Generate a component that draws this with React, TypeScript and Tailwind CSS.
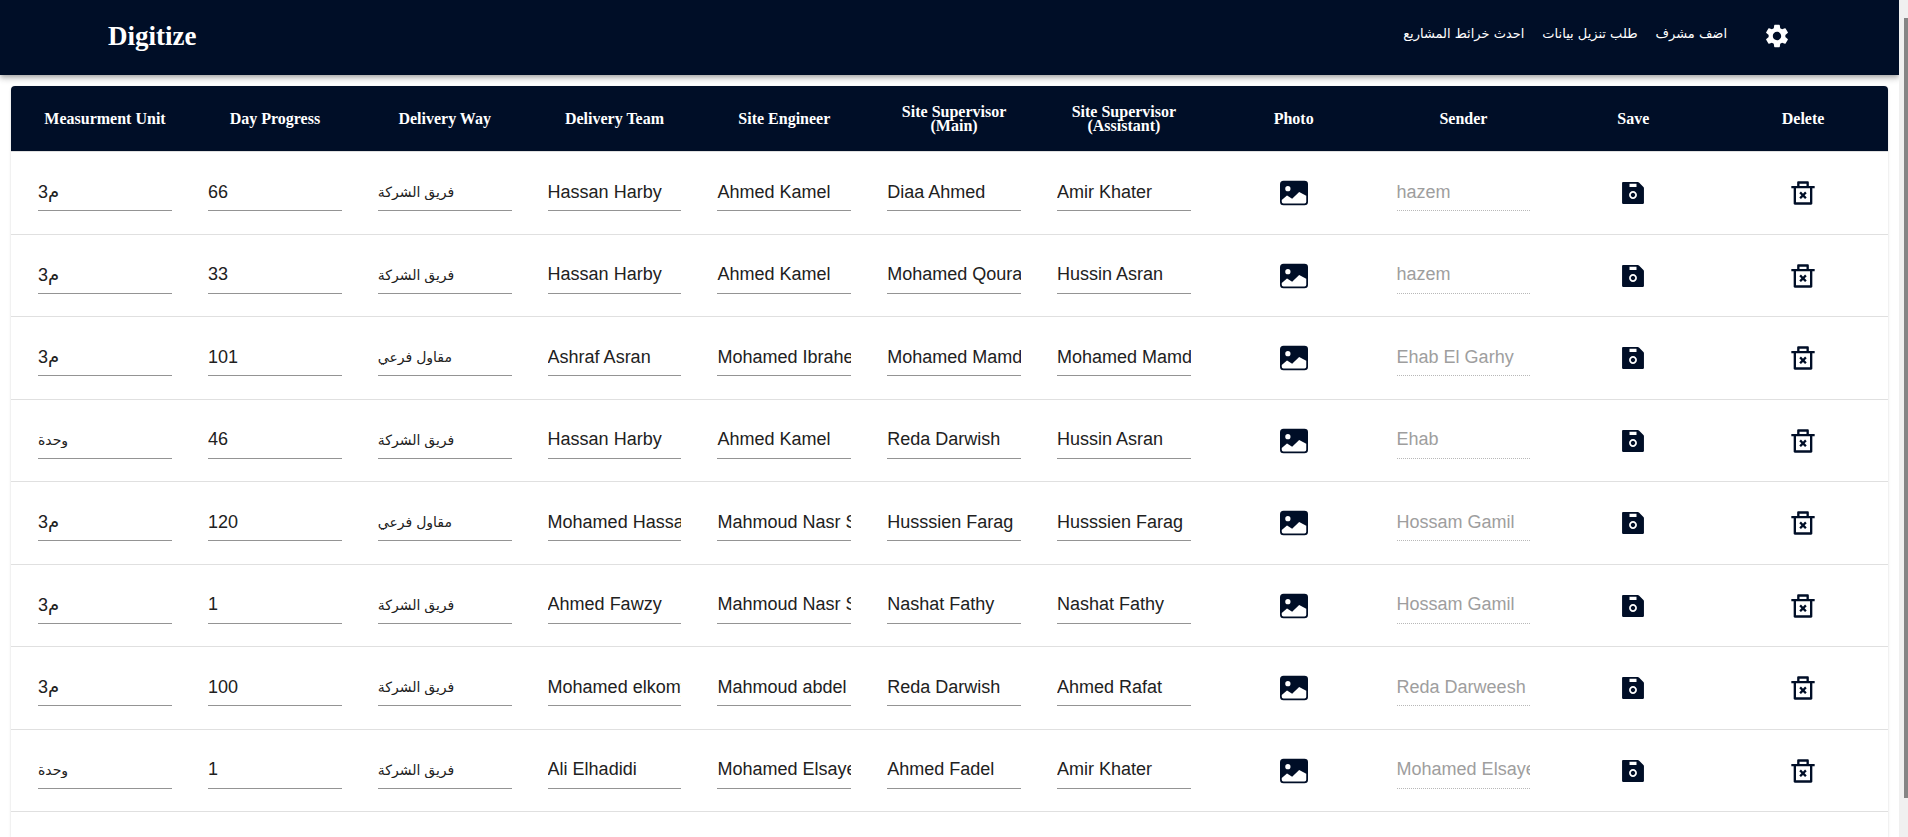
import { useState } from 'react';
import { AiFillSave } from 'react-icons/ai';
import { BsImageFill } from 'react-icons/bs';
import { MdSettings } from 'react-icons/md';
import { RiDeleteBin2Line } from 'react-icons/ri';

const columns = [
  'Measurment Unit',
  'Day Progress',
  'Delivery Way',
  'Delivery Team',
  'Site Engineer',
  'Site Supervisor (Main)',
  'Site Supervisor (Assistant)',
  'Photo',
  'Sender',
  'Save',
  'Delete',
];

const company = 'فريق الشركة';
const contractor = 'مقاول فرعي';
const cubic = 'م3';
const unit = 'وحدة';

type Row = { fields: string[]; sender: string };

const rows: Row[] = [
  { fields: [cubic, '66', company, 'Hassan Harby', 'Ahmed Kamel', 'Diaa Ahmed', 'Amir Khater'], sender: 'hazem' },
  { fields: [cubic, '33', company, 'Hassan Harby', 'Ahmed Kamel', 'Mohamed Qourany', 'Hussin Asran'], sender: 'hazem' },
  { fields: [cubic, '101', contractor, 'Ashraf Asran', 'Mohamed Ibrahem', 'Mohamed Mamdouh', 'Mohamed Mamdouh'], sender: 'Ehab El Garhy' },
  { fields: [unit, '46', company, 'Hassan Harby', 'Ahmed Kamel', 'Reda Darwish', 'Hussin Asran'], sender: 'Ehab' },
  { fields: [cubic, '120', contractor, 'Mohamed Hassan', 'Mahmoud Nasr Saad', 'Husssien Farag', 'Husssien Farag'], sender: 'Hossam Gamil' },
  { fields: [cubic, '1', company, 'Ahmed Fawzy', 'Mahmoud Nasr Saad', 'Nashat Fathy', 'Nashat Fathy'], sender: 'Hossam Gamil' },
  { fields: [cubic, '100', company, 'Mohamed elkomy', 'Mahmoud abdel', 'Reda Darwish', 'Ahmed Rafat'], sender: 'Reda Darweesh' },
  { fields: [unit, '1', company, 'Ali Elhadidi', 'Mohamed Elsayed', 'Ahmed Fadel', 'Amir Khater'], sender: 'Mohamed Elsayed' },
];

const cell = 'px-[18px] first:pl-[27px] py-0 align-middle';
const field =
  "block h-9 w-full border-b bg-transparent pb-px font-['Liberation_Sans','DejaVu_Sans',sans-serif] outline-none";

function Field({ label, initial }: { label: string; initial: string }) {
  const [value, setValue] = useState(initial);
  const arabicWord = /^[\u0600-\u06ff ]+$/.test(value);
  return (
    <input
      aria-label={label}
      value={value}
      onChange={(e) => setValue(e.target.value)}
      className={`${field} border-[#949494] text-[#212121] ${arabicWord ? 'text-sm' : 'text-lg'}`}
    />
  );
}

function IconButton({ label, children }: { label: string; children: React.ReactNode }) {
  return (
    <button type="button" aria-label={label} className="mx-auto block cursor-pointer text-[28px] text-[#000e27]">
      {children}
    </button>
  );
}

function Header() {
  return (
    <header className="relative z-10 flex h-[75px] shrink-0 items-center justify-between bg-[#000e27] px-[108px] pb-[3px] text-white shadow-[0_2px_4px_-1px_rgba(0,0,0,0.2),0_4px_5px_0_rgba(0,0,0,0.14),0_1px_10px_0_rgba(0,0,0,0.12)]">
      <h1 className="text-[27px] font-bold">Digitize</h1>
      <div className="flex items-center">
        <nav className="flex gap-[18px] pr-9 pb-1 font-['DejaVu_Sans',sans-serif] text-[13px]">
          <a href="#maps">احدث خرائط المشاريع</a>
          <a href="#download">طلب تنزيل بيانات</a>
          <a href="#supervisor">اضف مشرف</a>
        </nav>
        <button type="button" aria-label="Settings" className="cursor-pointer text-[28px]">
          <MdSettings />
        </button>
      </div>
    </header>
  );
}

export default function App() {
  return (
    <div className="flex h-screen overflow-hidden bg-white font-['Liberation_Serif',serif]">
      <div className="flex min-w-0 flex-1 flex-col overflow-hidden">
        <Header />
        <main className="flex flex-1 flex-col px-[11px] pt-[11px]">
          <div className="flex-1 rounded-t bg-white shadow-[0_2px_1px_-1px_rgba(0,0,0,0.2),0_1px_1px_0_rgba(0,0,0,0.14),0_1px_3px_0_rgba(0,0,0,0.12)]">
            <table className="w-full table-fixed border-separate border-spacing-0">
              <thead>
                <tr className="h-[66px]">
                  {columns.map((name) => (
                    <th
                      key={name}
                      scope="col"
                      className={`${cell} border-b border-[#e0e0e0] bg-[#000e27] bg-clip-padding text-base leading-[14px] font-bold text-white first:w-[179px] first:rounded-tl last:rounded-tr`}
                    >
                      {name}
                    </th>
                  ))}
                </tr>
              </thead>
              <tbody>
                {rows.map((row, i) => (
                  <tr key={i} className="odd:h-[83px] even:h-[82px] [&>td]:border-b [&>td]:border-[#e0e0e0]">
                    {row.fields.map((value, c) => (
                      <td key={c} className={cell}>
                        <Field label={columns[c]} initial={value} />
                      </td>
                    ))}
                    <td className={cell}>
                      <IconButton label="Photo">
                        <BsImageFill />
                      </IconButton>
                    </td>
                    <td className={cell}>
                      <input
                        aria-label="Sender"
                        disabled
                        value={row.sender}
                        readOnly
                        className={`${field} border-dotted border-[#b8b8b8] text-lg text-[#9e9e9e]`}
                      />
                    </td>
                    <td className={cell}>
                      <IconButton label="Save">
                        <AiFillSave />
                      </IconButton>
                    </td>
                    <td className={cell}>
                      <IconButton label="Delete">
                        <RiDeleteBin2Line />
                      </IconButton>
                    </td>
                  </tr>
                ))}
              </tbody>
            </table>
          </div>
        </main>
      </div>
      <div aria-hidden="true" className="flex w-[9px] shrink-0 flex-col bg-[#f0f0f0] pt-[18px] pb-[39px] pl-[5px]">
        <div className="flex-1 bg-[#858585]" />
      </div>
    </div>
  );
}
